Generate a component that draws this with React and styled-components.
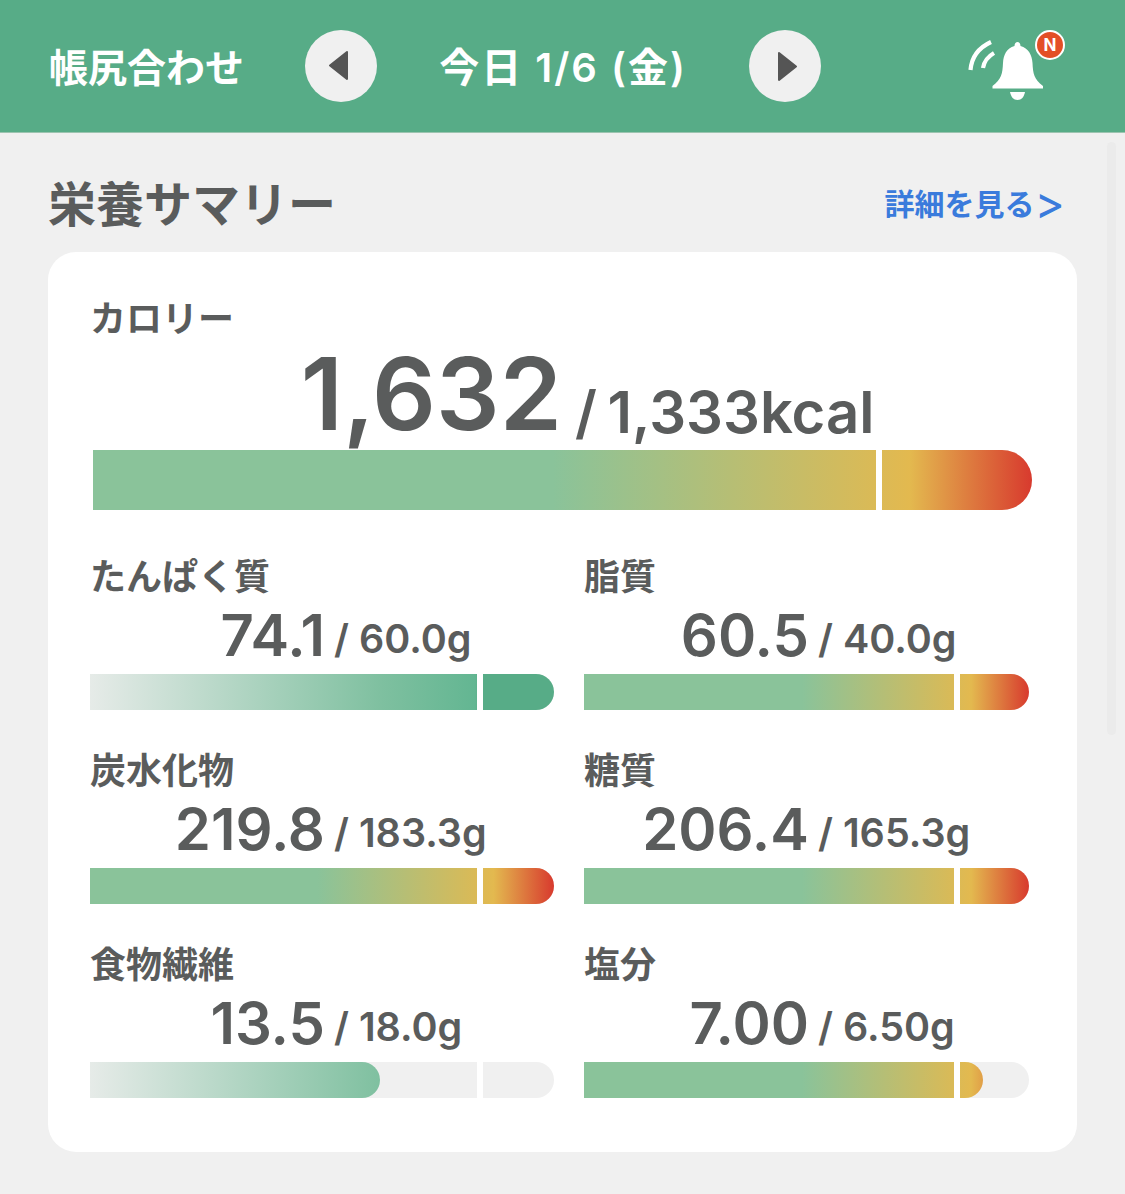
import styled, { createGlobalStyle } from "styled-components";

const GREEN = "#57ac87";
const TEXT = "#5a5c5c";

const OVER = "#8ac39a 0%, #8ac39a 49%, #e3b94f 87%, #d83a2e 100%";
const SHORT = "#e6ebe8 0%, #7fc0a0 62.5%, #63b692 83%, #57ac87 84%, #57ac87 100%";

const nutrients = [
  { name: "たんぱく質", value: "74.1", goal: "/ 60.0g", pct: 100, colors: SHORT },
  { name: "脂質", value: "60.5", goal: "/ 40.0g", pct: 100, colors: OVER },
  { name: "炭水化物", value: "219.8", goal: "/ 183.3g", pct: 100, colors: OVER },
  { name: "糖質", value: "206.4", goal: "/ 165.3g", pct: 100, colors: OVER },
  { name: "食物繊維", value: "13.5", goal: "/ 18.0g", pct: 62.5, colors: SHORT },
  { name: "塩分", value: "7.00", goal: "/ 6.50g", pct: 89.7, colors: OVER },
];

const Bar = ({ pct, colors, mark, height }) => (
  <Track $height={height}>
    <Fill $colors={colors} $height={height} style={{ width: `${pct}%`, backgroundSize: `${10000 / pct}% 100%` }} />
    <Mark $left={mark} />
  </Track>
);

const BellIcon = () => (
  <svg width="80" height="64" viewBox="0 0 80 64" fill="none">
    <path d="M2.500 31C3.500 19 10 9 23 3" stroke="#fff" strokeWidth="4.200" />
    <path d="M15 29C16 23 19 18 26 14" stroke="#fff" strokeWidth="4.200" />
    <path
      d="M52.500 7C52.500 4.500 51 3 49.500 3C48 3 46.500 4.500 46.500 7C38.500 9 35.500 16 35 24C34.500 35 33.500 40 24.500 47V49.500H75V47C66 40 65 35 64.500 24C64 16 60.500 9 52.500 7Z"
      fill="#fff"
    />
    <path d="M42 53H57C56 58 53.500 61 49.500 61C45.500 61 43 58 42 53Z" fill="#fff" />
  </svg>
);

export default function App() {
  return (
    <>
      <GlobalStyle />
      <Header>
        <AppTitle>帳尻合わせ</AppTitle>
        <RoundButton>
          <svg width="24" height="32" viewBox="0 0 24 32">
            <path d="M18 2L1 15.500L18 29Z" fill="#555" stroke="#555" strokeWidth="2" strokeLinejoin="round" />
          </svg>
        </RoundButton>
        <DateLabel>今日 1/6 (金)</DateLabel>
        <RoundButton>
          <svg width="24" height="32" viewBox="0 0 24 32">
            <path d="M6 3L23 16.500L6 30Z" fill="#555" stroke="#555" strokeWidth="2" strokeLinejoin="round" />
          </svg>
        </RoundButton>
        <BellWrap>
          <BellIcon />
          <Badge>N</Badge>
        </BellWrap>
      </Header>
      <Main>
        <Scrollbar />
        <TitleRow>
          <SectionTitle>栄養サマリー</SectionTitle>
          <DetailLink>
            詳細を見る<Chevron>&gt;</Chevron>
          </DetailLink>
        </TitleRow>
        <Card>
          <CalorieLabel>カロリー</CalorieLabel>
          <CalorieRow>
            <BigValue>1,632</BigValue>
            <BigGoal>/ 1,333kcal</BigGoal>
          </CalorieRow>
          <CalorieBar>
            <Bar pct={100} colors={OVER} mark={83.4} height={60} />
          </CalorieBar>
          <Grid>
            {nutrients.map((n, i) => (
              <Cell key={n.name}>
                <Label>{n.name}</Label>
                <ValueRow $split={i % 2 ? 236 : 246}>
                  <Value>{n.value}</Value>
                  <Goal>{n.goal}</Goal>
                </ValueRow>
                <Bar pct={n.pct} colors={n.colors} mark={i % 2 ? 83.15 : 83.4} height={36} />
              </Cell>
            ))}
          </Grid>
        </Card>
      </Main>
    </>
  );
}

const GlobalStyle = createGlobalStyle`
  html, body {
    margin: 0;
    height: 100%;
    overflow: hidden;
    background: #f0f0f0;
    font-family: Inter, "Noto Sans CJK JP", sans-serif;
  }
`;

const Header = styled.header`
  height: 132px;
  background: ${GREEN};
  border-bottom: 1px solid #9cc4b0;
  display: flex;
  align-items: center;
  padding-left: 50px;
`;
const AppTitle = styled.h1`
  width: 255px;
  margin: -2px 0 0 -1px;
  padding-right: 1px;
  color: #fff;
  font-size: 39px;
  font-weight: 700;
  white-space: nowrap;
`;
const RoundButton = styled.button`
  width: 72px;
  height: 72px;
  padding: 0;
  border: 0;
  border-radius: 50%;
  background: #f0f0f0;
  display: flex;
  align-items: center;
  justify-content: center;
`;
const DateLabel = styled.div`
  width: 372px;
  margin-top: -2px;
  text-align: center;
  color: #fff;
  font-size: 40px;
  font-weight: 600;
  letter-spacing: 2px;
  white-space: nowrap;
`;
const BellWrap = styled.div`
  position: relative;
  margin-left: 147px;
  margin-top: 10px;
  width: 80px;
  height: 64px;
  display: flex;
`;
const Badge = styled.span`
  position: absolute;
  left: 67px;
  top: -9px;
  width: 26px;
  height: 26px;
  border: 2px solid #fff;
  border-radius: 50%;
  background: #e34f26;
  color: #fff;
  font-size: 17px;
  font-weight: 700;
  line-height: 26px;
  text-align: center;
`;

const Main = styled.main`
  position: relative;
  padding: 0 48px;
`;
const Scrollbar = styled.div`
  position: absolute;
  left: 1107px;
  top: 9px;
  width: 9px;
  height: 593px;
  border-radius: 5px;
  background: #ebebeb;
`;
const TitleRow = styled.div`
  height: 60px;
  padding: 40px 12px 19px 0;
  display: flex;
  align-items: center;
  justify-content: space-between;
`;
const SectionTitle = styled.h2`
  margin: -4px 0 0;
  color: ${TEXT};
  font-size: 48px;
  font-weight: 700;
`;
const DetailLink = styled.a`
  margin-top: -2px;
  color: #3a7bdc;
  font-size: 30px;
  font-weight: 700;
  display: flex;
  align-items: center;
`;
const Chevron = styled.span`
  font-size: 46px;
  font-weight: 400;
  line-height: 40px;
`;

const Card = styled.section`
  width: 1029px;
  height: 900px;
  box-sizing: border-box;
  padding: 46px 48px 54px 42px;
  background: #fff;
  border-radius: 28px;
`;
const CalorieLabel = styled.div`
  height: 40px;
  line-height: 42px;
  color: ${TEXT};
  font-size: 36px;
  font-weight: 700;
`;
const CalorieRow = styled.div`
  height: 112px;
  display: grid;
  grid-template-columns: 472px auto;
  column-gap: 13px;
  align-items: start;
  color: ${TEXT};
`;
const BigValue = styled.span`
  margin-top: 6px;
  text-align: right;
  font-size: 100px;
  font-weight: 600;
  line-height: 100px;
`;
const BigGoal = styled.span`
  margin-top: 44px;
  font-size: 58px;
  font-weight: 600;
  word-spacing: -4px;
  white-space: nowrap;
  line-height: 60px;
`;
const CalorieBar = styled.div`
  margin-left: 3px;
  width: 939px;
`;
const Grid = styled.div`
  margin-top: 46px;
  display: grid;
  grid-template-columns: 464px 445px;
  column-gap: 30px;
  row-gap: 40px;
`;
const Cell = styled.div`
  display: flex;
  flex-direction: column;
`;
const Label = styled.div`
  height: 40px;
  line-height: 43px;
  color: ${TEXT};
  font-size: 36px;
  font-weight: 700;
`;
const ValueRow = styled.div`
  height: 78px;
  display: grid;
  grid-template-columns: ${(p) => p.$split - 11}px auto;
  column-gap: 9px;
  align-items: start;
  color: ${TEXT};
`;
const Value = styled.span`
  margin-top: 10px;
  text-align: right;
  font-size: 58px;
  font-weight: 600;
  line-height: 58px;
`;
const Goal = styled.span`
  margin-top: 23px;
  font-size: 39.500px;
  font-weight: 600;
  white-space: nowrap;
  line-height: 40px;
`;

const Track = styled.div`
  position: relative;
  height: ${(p) => p.$height}px;
  background: #f0f0f0;
  border-radius: 0 ${(p) => p.$height / 2}px ${(p) => p.$height / 2}px 0;
`;
const Fill = styled.div`
  height: 100%;
  background-image: linear-gradient(90deg, ${(p) => p.$colors});
  background-repeat: no-repeat;
  border-radius: 0 ${(p) => p.$height / 2}px ${(p) => p.$height / 2}px 0;
`;
const Mark = styled.div`
  position: absolute;
  top: 0;
  bottom: 0;
  left: ${(p) => p.$left}%;
  width: 6px;
  background: #fff;
`;
